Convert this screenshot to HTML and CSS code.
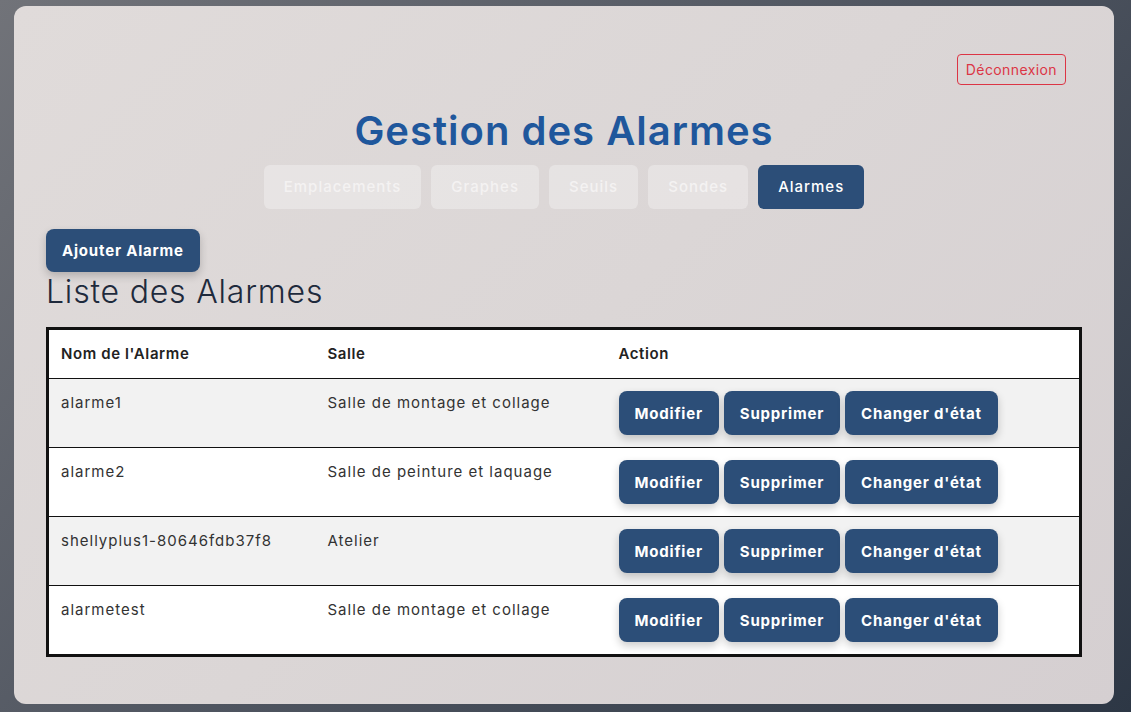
FILE: index.html
```html
<!DOCTYPE html>
<html lang="fr">
<head>
<meta charset="utf-8">
<title>Gestion des Alarmes</title>
<link rel="stylesheet" href="styles.css">
</head>
<body>
<div class="card">
  <div class="topbar">
    <button class="logout">Déconnexion</button>
  </div>
  <h1 class="title">Gestion des Alarmes</h1>
  <nav class="nav">
    <a class="nav-btn">Emplacements</a>
    <a class="nav-btn">Graphes</a>
    <a class="nav-btn">Seuils</a>
    <a class="nav-btn">Sondes</a>
    <a class="nav-btn active">Alarmes</a>
  </nav>
  <button class="btn add">Ajouter Alarme</button>
  <h2 class="subtitle">Liste des Alarmes</h2>
  <table class="table">
    <thead>
      <tr><th class="c1">Nom de l'Alarme</th><th class="c2">Salle</th><th>Action</th></tr>
    </thead>
    <tbody>
      <tr>
        <td>alarme1</td><td>Salle de montage et collage</td>
        <td><div class="actions"><button class="btn">Modifier</button><button class="btn">Supprimer</button><button class="btn">Changer d'état</button></div></td>
      </tr>
      <tr>
        <td>alarme2</td><td>Salle de peinture et laquage</td>
        <td><div class="actions"><button class="btn">Modifier</button><button class="btn">Supprimer</button><button class="btn">Changer d'état</button></div></td>
      </tr>
      <tr>
        <td>shellyplus1-80646fdb37f8</td><td>Atelier</td>
        <td><div class="actions"><button class="btn">Modifier</button><button class="btn">Supprimer</button><button class="btn">Changer d'état</button></div></td>
      </tr>
      <tr>
        <td>alarmetest</td><td>Salle de montage et collage</td>
        <td><div class="actions"><button class="btn">Modifier</button><button class="btn">Supprimer</button><button class="btn">Changer d'état</button></div></td>
      </tr>
    </tbody>
  </table>
</div>
</body>
</html>
```
FILE: styles.css
```css
* { box-sizing: border-box; }
html, body { height: 100%; }
body {
  margin: 0;
  padding: 6px 0 0 14px;
  font-family: Inter, "Noto Sans", sans-serif;
  background: linear-gradient(135deg, #717379 0%, #4f5560 50%, #2d3745 100%);
  overflow: hidden;
}
.card {
  width: 1100px;
  height: 698px;
  border-radius: 12px;
  background: linear-gradient(135deg, #e0dbda 0%, #dbd6d6 50%, #d5cfd1 100%);
  padding: 48px 32px 32px;
  display: flex;
  flex-direction: column;
  align-items: flex-start;
}
.topbar {
  align-self: stretch;
  display: flex;
  justify-content: flex-end;
  padding-right: 16px;
}
.logout {
  font-family: inherit;
  font-size: 14px;
  letter-spacing: 0.4px;
  color: #dc3545;
  background: transparent;
  border: 1px solid #dc3545;
  border-radius: 4px;
  padding: 0 8px;
  height: 31px;
  cursor: pointer;
}
.title {
  align-self: stretch;
  text-align: center;
  margin: 22px 0 0;
  font-size: 40px;
  line-height: 48px;
  font-weight: 600;
  letter-spacing: 1px;
  color: #1f579c;
}
.nav {
  align-self: stretch;
  display: flex;
  justify-content: center;
  gap: 10px;
  margin-top: 10px;
}
.nav-btn {
  display: block;
  height: 44px;
  line-height: 44px;
  padding: 0 20px;
  border-radius: 6px;
  font-size: 15px;
  font-weight: 500;
  letter-spacing: 1px;
  color: #f4f2f2;
  background: rgba(255,255,255,0.3);
}
.nav-btn.active {
  background: #2c4e78;
  color: #fff;
}
.btn {
  font-family: inherit;
  font-size: 15px;
  font-weight: 700;
  letter-spacing: 0.8px;
  color: #fff;
  background: #2c4e78;
  border: none;
  border-radius: 8px;
  height: 44px;
  padding: 0 16px;
  box-shadow: 0 4px 8px rgba(0,0,0,0.2);
  cursor: pointer;
}
.add {
  margin-top: 20px;
  height: 43px;
}
.subtitle {
  margin: 0;
  font-size: 32px;
  line-height: 40px;
  font-weight: 300;
  letter-spacing: 0.8px;
  color: #1e2a3c;
}
.table {
  margin-top: 15px;
  width: 1036px;
  border-collapse: collapse;
  border: 3px solid #111;
  font-size: 15px;
  color: #333;
}
.table th {
  text-align: left;
  font-weight: 600;
  letter-spacing: 0.6px;
  color: #222;
  background: #fff;
  padding: 12px;
  line-height: 24px;
  height: 48px;
}
.table td {
  padding: 12px;
  line-height: 24px;
  letter-spacing: 1px;
  vertical-align: top;
  border-top: 1px solid #111;
  background: #fff;
}
.table tbody tr:nth-child(odd) td { background: #f2f2f2; }
.c1 { width: 268px; }
.c2 { width: 291px; }
.actions {
  display: flex;
  gap: 5px;
}
```
